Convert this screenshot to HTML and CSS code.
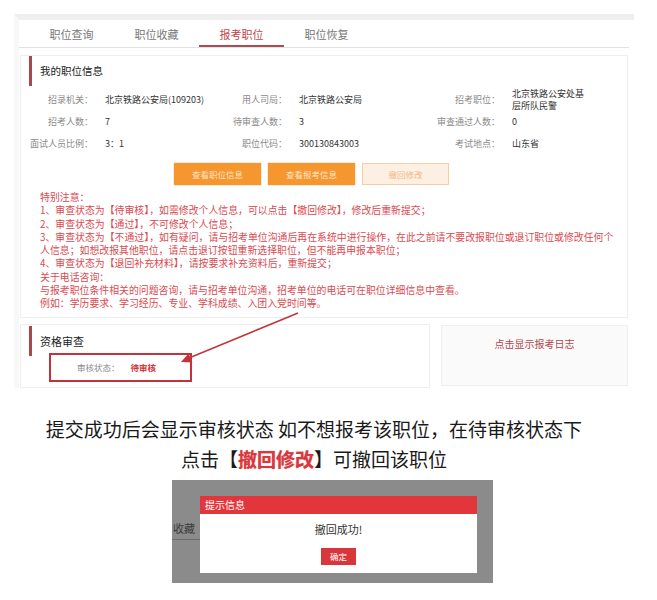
FILE: index.html
```html
<!DOCTYPE html>
<html>
<head lang="zh-CN">
    <meta charset="UTF-8">
    <title>报考职位</title>
    <link rel="stylesheet" href="styles.css">
</head>
<body>
<div class="page">
    <div class="panel">
        <ul class="tabs">
            <li>职位查询</li>
            <li>职位收藏</li>
            <li class="active">报考职位</li>
            <li>职位恢复</li>
        </ul>

        <div class="card info-card">
            <h3 class="card-title">我的职位信息</h3>
            <div class="info-grid">
                <span class="label">招录机关：</span>
                <span class="value">北京铁路公安局(109203)</span>
                <span class="label">用人司局：</span>
                <span class="value">北京铁路公安局</span>
                <span class="label">招考职位：</span>
                <span class="value wrap">北京铁路公安处基层所队民警</span>

                <span class="label">招考人数：</span>
                <span class="value">7</span>
                <span class="label">待审查人数：</span>
                <span class="value">3</span>
                <span class="label">审查通过人数：</span>
                <span class="value">0</span>

                <span class="label">面试人员比例：</span>
                <span class="value">3：1</span>
                <span class="label">职位代码：</span>
                <span class="value">300130843003</span>
                <span class="label">考试地点：</span>
                <span class="value">山东省</span>
            </div>
            <div class="actions">
                <span class="btn">查看职位信息</span>
                <span class="btn">查看报考信息</span>
                <span class="btn btn-light">撤回修改</span>
            </div>
            <div class="notice">
                <p>特别注意：</p>
                <p>1、审查状态为【待审核】，如需修改个人信息，可以点击【撤回修改】，修改后重新提交；</p>
                <p>2、审查状态为【通过】，不可修改个人信息；</p>
                <p>3、审查状态为【不通过】，如有疑问，请与招考单位沟通后再在系统中进行操作，在此之前请不要改报职位或退订职位或修改任何个<br>人信息；如想改报其他职位，请点击退订按钮重新选择职位，但不能再申报本职位；</p>
                <p>4、审查状态为【退回补充材料】，请按要求补充资料后，重新提交；</p>
                <p>关于电话咨询：</p>
                <p>与报考职位条件相关的问题咨询，请与招考单位沟通，招考单位的电话可在职位详细信息中查看。</p>
                <p>例如：学历要求、学习经历、专业、学科成绩、入团入党时间等。</p>
            </div>
        </div>

        <div class="bottom-row">
            <div class="card review-card">
                <h3 class="card-title">资格审查</h3>
                <div class="status-box">
                    <span class="status-label">审核状态：</span>
                    <span class="status-value">待审核</span>
                </div>
            </div>
            <div class="log-card">点击显示报考日志</div>
        </div>
    </div>

    <div class="caption">
        <p>提交成功后会显示审核状态 如不想报考该职位，在待审核状态下</p>
        <p>点击【<b>撤回修改</b>】可撤回该职位</p>
    </div>

    <div class="shot">
        <span class="shot-tab">收藏</span>
        <span class="shot-line"></span>
        <div class="dialog">
            <div class="dialog-head">提示信息</div>
            <div class="dialog-body">撤回成功!</div>
            <span class="dialog-btn">确定</span>
        </div>
    </div>

    <!-- 标注箭头 -->
    <svg class="arrow" width="657" height="400" viewBox="0 0 657 400">
        <line x1="298" y1="313" x2="189" y2="358" stroke="#c2343b" stroke-width="1.5"/>
        <polygon points="181,362 192.5,362.6 188.6,353.6" fill="#c2343b"/>
    </svg>
</div>
</body>
</html>
```

FILE: styles.css
```css
* {
    margin: 0;
    padding: 0;
    box-sizing: border-box;
}

ul {
    list-style: none;
}

body {
    background: #fff;
    font-family: "Noto Sans CJK SC", "Noto Sans", sans-serif;
    color: #333;
}

.page {
    position: relative;
    width: 657px;
    padding-top: 14px;
}

.panel {
    margin-left: 14px;
    width: 620px;
    border-top: 6px solid #efefef;
    border-left: 5px solid #f8f8f8;
    padding-left: 1px;
}

/* 顶部选项卡 */
.tabs {
    display: flex;
    height: 28px;
    margin-left: -1px;
    margin-right: 5px;
    padding-left: 10px;
    border-bottom: 1px solid #e2e2e2;
}

.tabs li {
    width: 85px;
    height: 27px;
    line-height: 29px;
    text-align: center;
    font-size: 11px;
    color: #777;
}

.tabs .active {
    color: #c2464c;
    border-bottom: 2px solid #b04a50;
}

.card {
    border: 1px solid #eeeeee;
    background: #fff;
}

.card-title {
    margin-left: 8px;
    padding-left: 8px;
    border-left: 3px solid #a8474c;
    font-size: 10.5px;
    font-weight: normal;
    color: #222;
    line-height: 30px;
}

.info-card {
    margin-top: 7px;
    width: 608px;
}

.info-grid {
    display: grid;
    grid-template-columns: 72px 110px 60px 110px 79px 78px;
    grid-template-rows: repeat(3, 22px);
    column-gap: 12px;
    align-items: center;
    margin-top: 3px;
    font-size: 9px;
    line-height: 12px;
}

.info-grid .label {
    text-align: right;
    color: #8a8a8a;
}

.info-grid .value {
    color: #333;
    white-space: nowrap;
}

.info-grid .wrap {
    white-space: normal;
}

.actions {
    display: flex;
    justify-content: center;
    gap: 7px;
    margin-top: 8px;
    padding-right: 25px;
}

.btn {
    width: 87px;
    height: 22px;
    line-height: 22px;
    text-align: center;
    font-size: 8.5px;
    background: #f5962e;
    color: #fde4c8;
    box-shadow: 0 0 1px #e08a2a;
}

.btn-light {
    background: #fdf0e2;
    border: 1px solid #f2cfa5;
    color: #f0b987;
    box-shadow: none;
    line-height: 20px;
}

.notice {
    margin-top: 6px;
    padding: 0 0 6px 19px;
    font-size: 9.9px;
    line-height: 13.3px;
    color: #da4a51;
    white-space: nowrap;
}

/* 下方两块 */
.bottom-row {
    display: flex;
    align-items: flex-start;
    gap: 11px;
    margin-top: 6px;
    width: 608px;
}

.review-card {
    width: 410px;
    height: 64px;
    padding-top: 1px;
}

.review-card .card-title {
    font-size: 11px;
}

.status-box {
    display: flex;
    align-items: center;
    margin: -3px 0 0 28px;
    width: 143px;
    height: 29px;
    padding-left: 26px;
    border: 2px solid #c2343b;
    font-size: 8.5px;
}

.status-label {
    color: #8a8a8a;
}

.status-value {
    margin-left: 11px;
    color: #d5343b;
    font-weight: bold;
}

.log-card {
    margin-top: 1px;
    width: 187px;
    height: 61px;
    padding-top: 10px;
    border: 1px solid #eeeeee;
    background: #fbfafa;
    text-align: center;
    font-size: 10px;
    color: #b0474c;
}

/* 说明文字 */
.caption {
    margin-top: 26px;
    padding-right: 29px;
    text-align: center;
    font-size: 19px;
    line-height: 30px;
    color: #1a1a1a;
}

.caption b {
    color: #d8383e;
    text-shadow: 0 0 1px #e57b7f;
}

/* 弹窗截图 */
.shot {
    position: relative;
    margin: 6px 0 0 172px;
    width: 321px;
    height: 103px;
    padding: 16px 0 0 28px;
    background: #8b8b8b;
    overflow: hidden;
}

.shot-tab {
    position: absolute;
    left: 1px;
    top: 40px;
    font-size: 11px;
    color: #3a3a3a;
}

.shot-line {
    position: absolute;
    left: 0;
    top: 59px;
    width: 30px;
    height: 1px;
    background: #6e6e6e;
}

.dialog {
    position: relative;
    width: 277px;
    height: 77px;
    background: #fff;
    text-align: center;
}

.dialog-head {
    height: 18px;
    line-height: 18px;
    padding-left: 5px;
    text-align: left;
    font-size: 10px;
    color: #fff;
    background: #e3363c;
}

.dialog-body {
    margin-top: 6px;
    font-size: 11px;
    line-height: 18px;
    color: #333;
}

.dialog-btn {
    display: inline-block;
    margin-top: 10px;
    width: 35px;
    height: 17px;
    line-height: 17px;
    font-size: 8.5px;
    color: #fff;
    background: #d8363b;
}

.arrow {
    position: absolute;
    left: 0;
    top: 0;
    pointer-events: none;
}
```
